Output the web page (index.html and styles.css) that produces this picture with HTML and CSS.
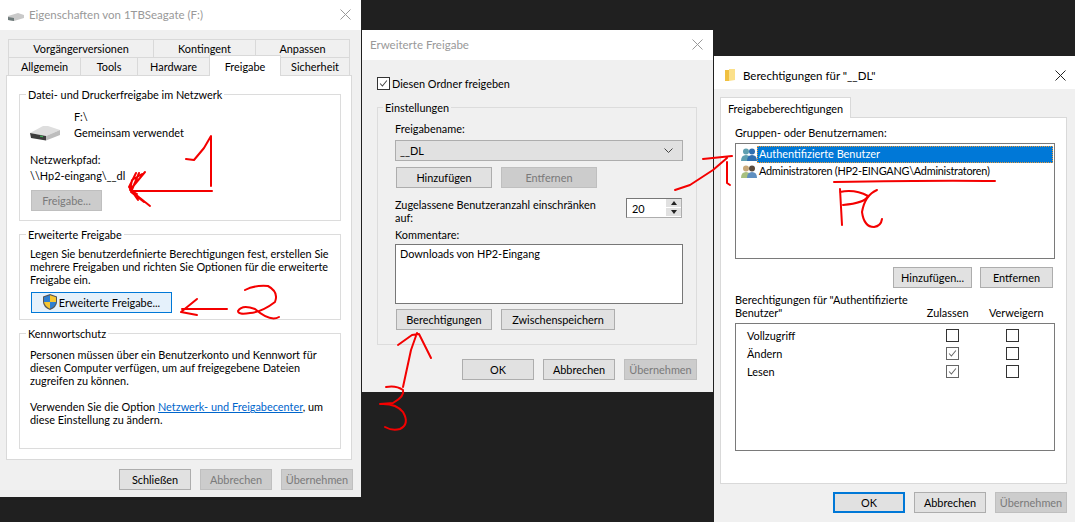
FILE: index.html
```html
<!DOCTYPE html>
<html lang="de">
<head>
<meta charset="utf-8">
<title>Freigabe</title>
<link rel="stylesheet" href="styles.css">
</head>
<body>
<main class="desktop">

<section class="win win-props">
  <header class="titlebar inactive">
    <svg class="tb-icon drive-small" viewBox="0 0 16 8"><path d="M0 3 L10 0 L16 2 L16 5 L6 8 L0 7Z" fill="#c9c9c9"/><path d="M0 4 L6 5 L6 8 L0 7Z" fill="#6d7a7a"/></svg>
    <span class="title">Eigenschaften von 1TBSeagate (F:)</span>
    <svg class="close" viewBox="0 0 11 11"><path d="M0.5 0.5L10.5 10.5M10.5 0.5L0.5 10.5" stroke="#999" fill="none"/></svg>
  </header>
  <div class="body props-body">
    <div class="tabrow tabrow-top">
      <span class="tab t-vor">Vorgängerversionen</span>
      <span class="tab t-kon">Kontingent</span>
      <span class="tab t-anp">Anpassen</span>
    </div>
    <div class="tabrow tabrow-bottom">
      <span class="tab t-all">Allgemein</span>
      <span class="tab t-too">Tools</span>
      <span class="tab t-har">Hardware</span>
      <span class="tab active t-fre">Freigabe</span>
      <span class="tab t-sic">Sicherheit</span>
    </div>
    <div class="panel props-panel">
      <fieldset class="group g-net">
        <legend>Datei- und Druckerfreigabe im Netzwerk</legend>
        <div class="drive-row">
          <svg class="drive" viewBox="0 0 30 16">
            <path d="M0 8 L13 1 L18 1 L30 5 L16 11Z" fill="#dedede"/>
            <path d="M0 8 L16 11 L16 15.5 L1 13Z" fill="#3c3c3c"/>
            <path d="M16 11 L30 5 L30 10 L16 15.5Z" fill="#bdbdbd"/>
            <path d="M10 10.5 L13 11 L13 12.2 L10 11.7Z" fill="#3fae5a"/>
          </svg>
          <div class="drive-text"><div>F:\</div><div>Gemeinsam verwendet</div></div>
        </div>
        <div class="line path-label">Netzwerkpfad:</div>
        <div class="line path-value">\\Hp2-eingang\__dl</div>
        <button class="btn disabled btn-share">Freigabe...</button>
      </fieldset>
      <fieldset class="group g-adv">
        <legend>Erweiterte Freigabe</legend>
        <p class="para">Legen Sie benutzerdefinierte Berechtigungen fest, erstellen Sie<br>mehrere Freigaben und richten Sie Optionen für die erweiterte<br>Freigabe ein.</p>
        <button class="btn focus-blue btn-adv">
          <svg class="shield" viewBox="0 0 14 16">
            <path d="M7 0 L14 2.5 V8 Q14 13 7 16 Q0 13 0 8 V2.5Z" fill="#555"/>
            <path d="M7 1.2 V8 H1 V3.2Z" fill="#2f7fd0"/>
            <path d="M7 1.2 L13 3.2 V8 H7Z" fill="#f6c630"/>
            <path d="M1 8 H7 V14.8 Q2 12.5 1 8Z" fill="#f6c630"/>
            <path d="M7 8 H13 Q12.4 12.5 7 14.8Z" fill="#2f7fd0"/>
          </svg>
          <span>Erweiterte Freigabe...</span>
        </button>
      </fieldset>
      <fieldset class="group g-pass">
        <legend>Kennwortschutz</legend>
        <p class="para">Personen müssen über ein Benutzerkonto und Kennwort für<br>diesen Computer verfügen, um auf freigegebene Dateien<br>zugreifen zu können.</p>
        <p class="para para-gap">Verwenden Sie die Option <a class="link" href="#">Netzwerk- und Freigabecenter</a>, um<br>diese Einstellung zu ändern.</p>
      </fieldset>
    </div>
    <div class="actions">
      <button class="btn w72">Schließen</button>
      <button class="btn disabled w72">Abbrechen</button>
      <button class="btn disabled w72">Übernehmen</button>
    </div>
  </div>
</section>

<section class="win win-adv">
  <header class="titlebar inactive">
    <span class="title">Erweiterte Freigabe</span>
    <svg class="close" viewBox="0 0 11 11"><path d="M0.5 0.5L10.5 10.5M10.5 0.5L0.5 10.5" stroke="#999" fill="none"/></svg>
  </header>
  <div class="body adv-body">
    <label class="check-row">
      <span class="cb cb-dark"><svg viewBox="0 0 13 13"><path d="M2.5 6.5L5.2 9.5L10.5 3" stroke="#444" fill="none" stroke-width="1.2"/></svg></span>
      <span class="check-text">Diesen Ordner freigeben</span>
    </label>
    <fieldset class="group g-set">
      <legend>Einstellungen</legend>
      <div class="line name-label">Freigabename:</div>
      <div class="select">
        <span>__DL</span>
        <svg viewBox="0 0 9 5"><path d="M0.5 0.5L4.5 4.5L8.5 0.5" stroke="#444" fill="none"/></svg>
      </div>
      <div class="btn-row">
        <button class="btn w96">Hinzufügen</button>
        <button class="btn disabled w96">Entfernen</button>
      </div>
      <div class="limit-row">
        <div class="limit-label">Zugelassene Benutzeranzahl einschränken<br>auf:</div>
        <div class="spin">
          <span class="spin-val">20</span>
          <span class="spin-btns">
            <span class="spin-btn"><i class="up"></i></span>
            <span class="spin-btn"><i class="down"></i></span>
          </span>
        </div>
      </div>
      <div class="line comment-label">Kommentare:</div>
      <div class="textarea">Downloads von HP2-Eingang</div>
      <div class="btn-row btn-row-2">
        <button class="btn w96">Berechtigungen</button>
        <button class="btn w114">Zwischenspeichern</button>
      </div>
    </fieldset>
    <div class="actions adv-actions">
      <button class="btn w72">OK</button>
      <button class="btn w72">Abbrechen</button>
      <button class="btn disabled w73">Übernehmen</button>
    </div>
  </div>
</section>

<section class="win win-perm">
  <header class="titlebar perm-title">
    <svg class="tb-icon folder" viewBox="0 0 10 12"><path d="M0 1 H4 V12 H0Z" fill="#f0c040"/><path d="M4 0 H10 V11 L4 12Z" fill="#fbe08a"/></svg>
    <span class="title title-active">Berechtigungen für "__DL"</span>
    <svg class="close" viewBox="0 0 11 11"><path d="M0.5 0.5L10.5 10.5M10.5 0.5L0.5 10.5" stroke="#222" fill="none"/></svg>
  </header>
  <div class="body perm-body">
    <div class="tabrow perm-tabs">
      <span class="tab active t-perm">Freigabeberechtigungen</span>
    </div>
    <div class="panel perm-panel">
      <div class="line groups-label">Gruppen- oder Benutzernamen:</div>
      <div class="listbox users">
        <div class="user-row">
          <svg class="users-icon" viewBox="0 0 16 13">
            <circle cx="5" cy="3.5" r="3" fill="#5f9fb0"/><path d="M0 13 Q0 7 5 7 Q10 7 10 13Z" fill="#5f9fb0"/>
            <circle cx="11" cy="3.5" r="3" fill="#2f6fb0"/><path d="M6 13 Q6 7 11 7 Q16 7 16 13Z" fill="#2f6fb0"/>
          </svg>
          <span class="user-name selected">Authentifizierte Benutzer</span>
        </div>
        <div class="user-row">
          <svg class="users-icon" viewBox="0 0 16 13">
            <circle cx="5" cy="3.5" r="3" fill="#c8a878"/><path d="M0 13 Q0 7 5 7 Q10 7 10 13Z" fill="#a8c080"/>
            <circle cx="11" cy="3.5" r="3" fill="#5a4a3c"/><path d="M6 13 Q6 7 11 7 Q16 7 16 13Z" fill="#5f8fc0"/>
          </svg>
          <span class="user-name admin-name">Administratoren (HP2-EINGANG\Administratoren)</span>
        </div>
      </div>
      <div class="btn-row perm-btns">
        <button class="btn w79">Hinzufügen...</button>
        <button class="btn w73">Entfernen</button>
      </div>
      <div class="perm-head">
        <div class="perm-head-label">Berechtigungen für "Authentifizierte<br>Benutzer"</div>
        <div class="col-head col-allow">Zulassen</div>
        <div class="col-head col-deny">Verweigern</div>
      </div>
      <div class="listbox perms">
        <div class="perm-row"><span class="perm-name">Vollzugriff</span><span class="cell"><span class="cb"></span></span><span class="cell"><span class="cb"></span></span></div>
        <div class="perm-row"><span class="perm-name">Ändern</span><span class="cell"><span class="cb cb-grey"><svg viewBox="0 0 13 13"><path d="M2.5 6.5L5.2 9.5L10.5 3" stroke="#666" fill="none" stroke-width="1.2"/></svg></span></span><span class="cell"><span class="cb"></span></span></div>
        <div class="perm-row"><span class="perm-name">Lesen</span><span class="cell"><span class="cb cb-grey"><svg viewBox="0 0 13 13"><path d="M2.5 6.5L5.2 9.5L10.5 3" stroke="#666" fill="none" stroke-width="1.2"/></svg></span></span><span class="cell"><span class="cb"></span></span></div>
      </div>
    </div>
    <div class="actions perm-actions">
      <button class="btn default w72">OK</button>
      <button class="btn w72">Abbrechen</button>
      <button class="btn disabled w72">Übernehmen</button>
    </div>
  </div>
</section>

<svg class="marks" viewBox="0 0 1075 522">
  <g fill="none" stroke="#f40000" stroke-width="2" stroke-linecap="round" stroke-linejoin="round">
    <path d="M186 159 L194 160 L204 148 L211 136 L211 186"/>
    <path d="M212 191 H133"/>
    <path d="M145 172 L130 190 L150 206 M136 173 L129 187 L138 200 M142 174 L132 180 L130 190 L137 194 M139 173 L131 192 L144 202"/>
    <path d="M227 309 H182 M197 299 L181 312 L197 315"/>
    <path d="M245 290 Q254 285 268 286 Q279 292 275 302 Q262 312 250 313 Q238 315 238 311 Q242 304 255 309 Q270 322 279 317"/>
    <path d="M403 387 L411 350 L417 333 M398 345 L412 335 L419 334 L431 358"/>
    <path d="M386 387 Q396 385 403 390 Q405 396 393 403 L380 404 Q396 403 403 412 Q410 424 400 429 Q392 431 385 427"/>
    <path d="M675 190 L690 185 L713 170 L727 158 M703 159 L732 156 M727 162 V183 L730 185"/>
    <path d="M834 182 Q940 180 995 181"/>
    <path d="M840 189 L842 225 M840 192 Q855 189 868 196 Q865 203 843 205"/>
    <path d="M877 190 Q865 195 862 212 Q864 227 874 227 Q881 226 882 219"/>
  </g>
</svg>

</main>
</body>
</html>
```
FILE: styles.css
```css
* { box-sizing: border-box; }
html, body { margin: 0; padding: 0; }
body { width: 1075px; height: 522px; overflow: hidden; background: #202020; font: 10.9px/13px "Lato", "Liberation Sans", sans-serif; color: #000; }
.desktop { position: relative; width: 1075px; height: 522px; }
.win { position: absolute; display: flex; flex-direction: column; background: #f0f0f0; }
.win-props { left: 0; top: 0; width: 361px; height: 497px; }
.win-adv { left: 362px; top: 30px; width: 351px; height: 362px; }
.win-perm { left: 714px; top: 56px; width: 361px; height: 466px; }

.titlebar { display: flex; align-items: center; height: 30px; background: #fff; flex: none; padding: 0 10px 1px 8px; }
.perm-title { height: 33px; padding: 5px 9px 0 11px; }
.title { color: #999; flex: 1; font-size: 11.5px; }
.title-active { color: #000; }
.tb-icon { flex: none; }
.drive-small { width: 16px; height: 8px; margin-right: 5px; margin-top: 4px; }
.folder { width: 10px; height: 12px; margin-right: 8px; }
.close { width: 11px; height: 11px; flex: none; }

.body { flex: 1; display: flex; flex-direction: column; min-height: 0; }
.props-body { padding: 9px 9px 0 6px; }

.tabrow { display: flex; height: 18px; flex: none; position: relative; }
.tabrow-top { margin-left: 2px; width: 342px; }
.tabrow-bottom { margin-left: 2px; width: 342px; }
.tab { display: flex; align-items: center; justify-content: center; background: #f0f0f0; border: 1px solid #d9d9d9; border-bottom: 0; margin-right: -1px; height: 18px; }
.tab.active { background: #fff; height: 21px; margin-top: -2px; position: relative; z-index: 2; }
.t-vor { width: 146px; } .t-kon { width: 103px; } .t-anp { width: 95px; }
.t-all { width: 73px; } .t-too { width: 58px; } .t-har { width: 73px; } .t-fre { width: 72px; } .t-sic { width: 70px; }

.panel { background: #fff; border: 1px solid #d9d9d9; flex: none; }
.props-panel { width: 346px; height: 385px; padding: 12px 10px 0 12px; display: flex; flex-direction: column; gap: 7px; }

.group { margin: 0; border: 1px solid #dcdcdc; min-width: 0; padding: 0; }
.group legend { padding: 0 2px; margin-left: -4px; line-height: 13px; }
.g-net { height: 133px; padding: 8px 10px 0 10px; }
.g-adv { height: 92px; padding: 6px 10px 0 10px; }
.g-pass { height: 122px; padding: 8px 10px 0 10px; }
.para { margin: 0; white-space: nowrap; }
.para-gap { margin-top: 13px; }
.link { color: #0066cc; text-decoration: underline; }

.drive-row { display: flex; align-items: flex-end; }
.drive { width: 30px; height: 16px; flex: none; margin: 0 14px 0 0; }
.drive-text div { height: 16px; line-height: 16px; }
.line { line-height: 13px; }
.path-label { margin-top: 12px; }
.path-value { margin-top: 3px; }

.btn { display: inline-flex; align-items: center; justify-content: center; height: 21px; padding: 0 0 1px; font: inherit; color: #000; background: #e1e1e1; border: 1px solid #adadad; flex: none; }
.btn.disabled { background: #ccc; border-color: #bfbfbf; color: #7a7a7a; }
.focus-blue { background: #e5f1fb; border-color: #0078d7; }
.btn.default { border: 2px solid #0078d7; }
.w72 { width: 72px; } .w73 { width: 73px; } .w79 { width: 79px; } .w96 { width: 96px; } .w114 { width: 114px; }
.btn-share { width: 71px; margin-top: 8px; margin-left: 1px; }
.btn-adv { width: 141px; margin-top: 6px; margin-left: 1px; gap: 2px; }
.shield { width: 14px; height: 16px; }

.actions { display: flex; justify-content: flex-end; gap: 9px; }
.props-body .actions { margin-top: 9px; margin-right: -1px; }
.adv-actions { margin-top: 14px; }

.adv-body { padding: 17px 16px 0 15px; }
.check-row { display: flex; align-items: center; gap: 2px; }
.check-text { margin-top: -1px; }
.cb { display: inline-flex; width: 13px; height: 13px; background: #fff; border: 1px solid #333; flex: none; }
.cb svg { width: 11px; height: 11px; }
.cb-grey { border-color: #666; }
.g-set { height: 244px; margin-top: 11px; padding: 8px 0 0 17px; }
.g-set legend { margin-left: -12px; }
.name-label { margin-top: 0; }
.select { display: flex; align-items: center; justify-content: space-between; width: 288px; height: 21px; margin-top: 5px; padding: 0 9px 1px 4px; background: #e1e1e1; border: 1px solid #adadad; }
.select svg { width: 9px; height: 5px; }
.btn-row { display: flex; gap: 9px; margin-top: 6px; margin-left: 1px; }
.limit-row { display: flex; justify-content: space-between; align-items: flex-start; width: 287px; margin-top: 10px; }
.limit-label { white-space: nowrap; }
.spin { display: flex; width: 56px; height: 20px; background: #fff; border: 1px solid #adadad; border-left-color: #777; border-top-color: #777; }
.spin-val { flex: 1; padding: 3px 0 0 5px; }
.spin-btns { display: flex; flex-direction: column; width: 16px; }
.spin-btn { flex: 1; display: flex; align-items: center; justify-content: center; background: #e1e1e1; border: 1px solid #fff; border-width: 0 0 1px 1px; }
.up { border: 3px solid transparent; border-top: 0; border-bottom: 4px solid #222; }
.down { border: 3px solid transparent; border-bottom: 0; border-top: 4px solid #222; }
.comment-label { margin-top: 4px; }
.textarea { width: 288px; height: 60px; margin-top: 3px; padding: 2px 4px; background: #fff; border: 1px solid #777; }
.btn-row-2 { margin-top: 5px; }

.perm-body { padding: 8px 8px 0 6px; }
.perm-tabs { height: 20px; }
.t-perm { width: 131px; }
.perm-body .tab.active { margin-top: 0; }
.perm-panel { width: 347px; height: 367px; padding: 8px 11px 0 14px; }
.groups-label { margin-top: 0; }
.listbox { background: #fff; border: 1px solid #7a7a7a; width: 320px; }
.users { height: 116px; margin-top: 4px; padding: 2px 1px; }
.user-row { display: flex; align-items: center; height: 17px; padding-left: 4px; }
.users-icon { width: 16px; height: 13px; flex: none; }
.user-name { flex: 1; height: 17px; line-height: 16px; padding-left: 2px; }
.admin-name { letter-spacing: -0.25px; }
.user-name.selected { background: #0078d7; color: #fff; outline: 1px dotted #e89a3c; outline-offset: -1px; }
.perm-btns { justify-content: flex-end; gap: 8px; margin: 8px 0 0 0; width: 318px; }
.perm-head { display: flex; align-items: flex-end; width: 320px; margin-top: 5px; }
.perm-head-label { width: 184px; white-space: nowrap; }
.col-allow { width: 60px; text-align: center; }
.col-deny { width: 78px; text-align: center; }
.perms { height: 128px; margin-top: 4px; padding-top: 2px; }
.perm-row { display: flex; align-items: center; height: 18px; padding-left: 11px; }
.perm-name { width: 175px; }
.cell { width: 60px; display: flex; justify-content: center; }
.perm-actions { margin-top: 8px; margin-right: 0; }

.marks { position: absolute; left: 0; top: 0; width: 1075px; height: 522px; pointer-events: none; }
```
